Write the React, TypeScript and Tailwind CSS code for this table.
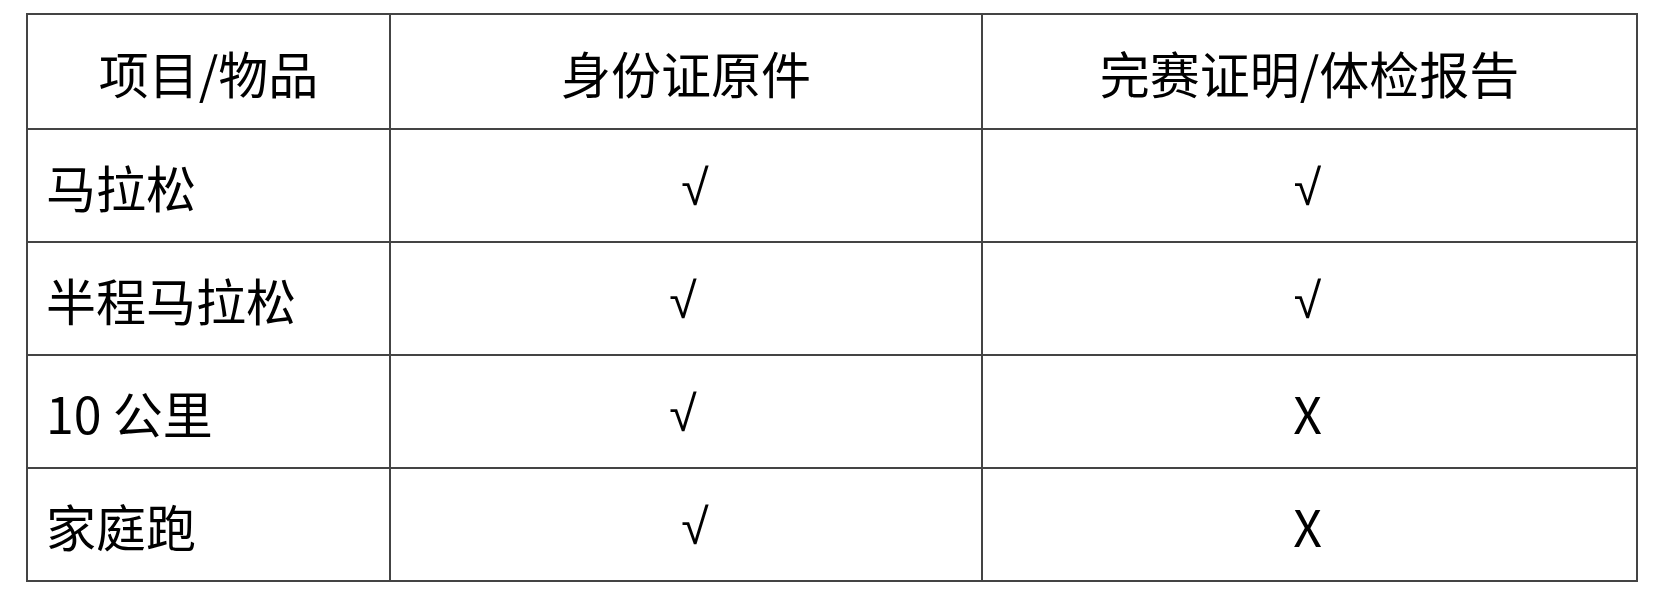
const rows = [
  { name: '马拉松', id: '√', cert: '√', idShift: 'pl-[18px]' },
  { name: '半程马拉松', id: '√', cert: '√', idShift: 'pr-[6px]' },
  { name: '10 公里', id: '√', cert: 'X', idShift: 'pr-[6px]' },
  { name: '家庭跑', id: '√', cert: 'X', idShift: 'pl-[18px]' }
];

function Mark({ value }: { value: string }) {
  if (value === '√') {
    return <span style={{ fontFamily: '"Liberation Sans", Arial, sans-serif' }}>√</span>;
  }
  return <span>{value}</span>;
}

export default function App() {
  return (
    <div
      className="w-[1672px] h-[598px] bg-white pl-[26px] pt-[13px] text-black"
      style={{ fontFamily: '"Noto Sans CJK SC", "Noto Sans", sans-serif' }}
    >
      <table className="table-fixed border-collapse text-[50px] leading-none">
        <colgroup>
          <col className="w-[363px]" />
          <col className="w-[592px]" />
          <col className="w-[655px]" />
        </colgroup>
        <thead>
          <tr className="h-[115px]">
            <th className="border-2 border-[#444] font-normal text-center">项目/物品</th>
            <th className="border-2 border-[#444] font-normal text-center">身份证原件</th>
            <th className="border-2 border-[#444] font-normal text-center">完赛证明/体检报告</th>
          </tr>
        </thead>
        <tbody>
          {rows.map((row) => (
            <tr key={row.name} className="h-[113px]">
              <td className="border-2 border-[#444] pl-[18px]">{row.name}</td>
              <td className={`border-2 border-[#444] text-center ${row.idShift}`}>
                <Mark value={row.id} />
              </td>
              <td className="border-2 border-[#444] text-center pr-[4px]">
                <Mark value={row.cert} />
              </td>
            </tr>
          ))}
        </tbody>
      </table>
    </div>
  );
}
